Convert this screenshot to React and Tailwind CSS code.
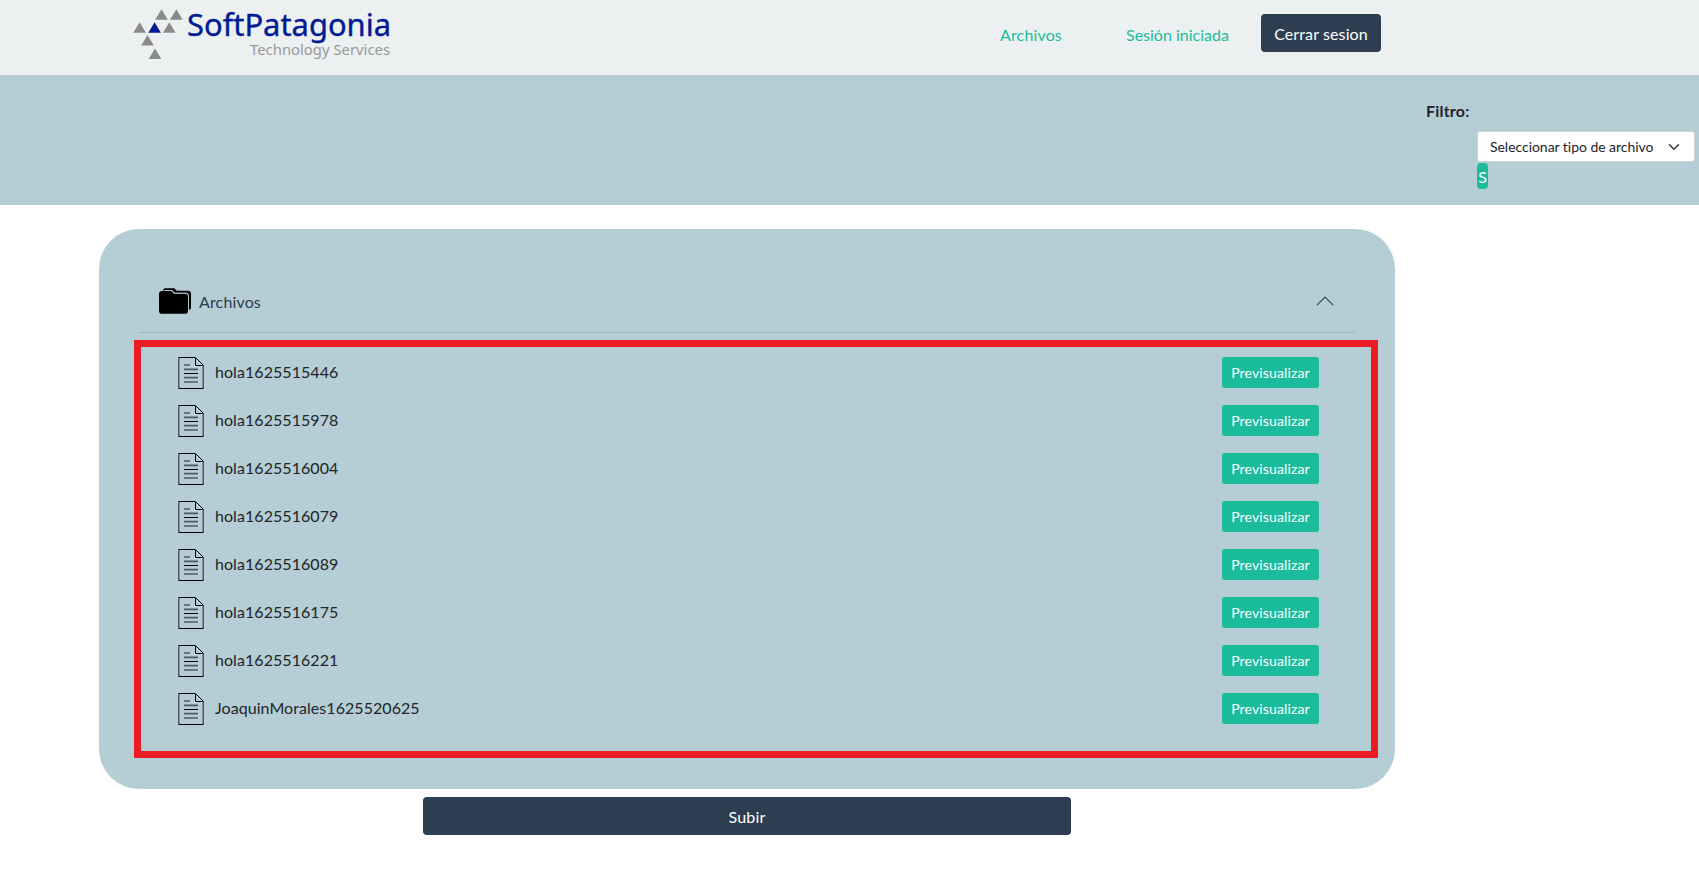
const FILES = [
  'hola1625515446',
  'hola1625515978',
  'hola1625516004',
  'hola1625516079',
  'hola1625516089',
  'hola1625516175',
  'hola1625516221',
  'JoaquinMorales1625520625',
];

function Logo() {
  return (
    <svg width="264" height="69" viewBox="132 0 264 69" className="block overflow-visible">
      <path
        fill="#8a8a8c"
        d="M161.500 9.300l6.300 10.500h-12.600zM176.300 9.300l6.300 10.500h-12.600zM139.600 22.200l6.300 10.500h-12.600zM169.300 22.200l6.300 10.500h-12.600zM147.500 35l6.300 10.500h-12.600zM155 48.400l6.300 10.500h-12.600z"
      />
      <path fill="#021b93" d="M154.600 22.200l6.300 10.500h-12.600z" />
      <text x="187" y="35.8" textLength="204" lengthAdjust="spacingAndGlyphs" fontSize="31.5" fill="#021b93" stroke="#021b93" strokeWidth=".4" fontFamily="'Noto Sans', sans-serif">
        SoftPatagonia
      </text>
      <text x="250" y="54.5" textLength="140" lengthAdjust="spacingAndGlyphs" fontSize="15" fill="#98999b" fontFamily="'Noto Sans', sans-serif">
        Technology Services
      </text>
    </svg>
  );
}

function FolderIcon() {
  return (
    <svg width="32" height="26" viewBox="0 0 32 26" className="block">
      <path d="M4 3C4 1.200 5 .3 6.500 .3H14c1.500 0 2 .5 2.700 1.400.6.800 1 1.100 2 1.100h10.500C31 2.800 32 3.700 32 5.500v14c0 1.500-.8 2.300-2.500 2.400V8c0-2-1-3-3-3H16.500c-1 0-1.400-.4-2-1.200C13.800 2.700 13 2.200 12 2.200z" />
      <path d="M0 6c0-2 1-3 3-3h8c1.400 0 2 .4 2.700 1.500.6.900 1.200 1.300 2.300 1.300h10c2 0 3 .9 3 2.800V23c0 1.900-1 2.800-3 2.800H3c-2 0-3-.9-3-2.800z" />
      <path fill="none" stroke="#b5cdd4" strokeWidth=".9" d="M4.500 2.500H12c1.200 0 1.800.5 2.500 1.500.5.800 1 1.100 2 1.100h10c2 0 3 1 3 2.900v14" />
    </svg>
  );
}

function FileIcon() {
  return (
    <svg width="26" height="32" viewBox="0 0 26 32" fill="none" stroke="#000" className="block shrink-0">
      <path d="M.5 .5H17.500M.5 31.500H25.500M17.500 .5V8.500H25.500M17.500 .5L25.500 8.500" />
      <path stroke="#505a5e" strokeWidth="1.500" d="M.75 1V31M25.250 8.500V31" />
      <path stroke="#505a5e" strokeWidth="1.700" d="M6 8H12M6 12.300H20M6 20.700H20M6 25H20" />
      <path d="M6 16.500H20" />
    </svg>
  );
}

export default function App() {
  return (
    <div className="h-[871px] w-full overflow-hidden bg-white font-['Lato',sans-serif] text-base leading-6 text-[#212529] [font-variant-ligatures:none]">
      <header className="flex h-[75px] items-start bg-[#ecf0f1] pl-[132px]">
        <div className="w-[868px]">
          <Logo />
        </div>
        <nav className="flex text-[#1abc9c]">
          <a className="w-[126px] pt-[23px] tracking-[0.15px]">Archivos</a>
          <a className="w-[135px] pt-[23px]">Sesión iniciada</a>
        </nav>
        <button className="mt-3.5 h-[38px] w-[120px] rounded bg-[#2c3e50] pt-0.5 tracking-[0.12px] text-white">Cerrar sesion</button>
      </header>

      <section className="h-[130px] bg-[#b5cdd4] pl-[1426px] pt-6">
        <div className="font-bold tracking-[0.2px]">Filtro:</div>
        <div className="ml-[51px] mt-2">
          <div className="flex h-[31px] w-[218px] items-center justify-between rounded-[3px] border border-[#ced4da] bg-white pl-3 pr-3.5 text-sm">
            <span className="whitespace-nowrap tracking-[-0.04px]">Seleccionar tipo de archivo</span>
            <svg width="12" height="12" viewBox="0 0 16 16" fill="none" stroke="#343a40" strokeWidth="2" strokeLinecap="round" strokeLinejoin="round">
              <path d="M2 5l6 6 6-6" />
            </svg>
          </div>
          <button className="mt-px flex h-[26px] w-[11px] items-center justify-center rounded bg-[#1abc9c] pt-0.5 text-white">S</button>
        </div>
      </section>

      <main className="ml-[99px] mt-6 w-[1296px]">
        <section className="h-[560px] rounded-[40px] bg-[#b5cdd4] pl-[35px] pt-10">
          <div className="ml-[5px] flex h-16 w-[1216px] items-center border-b border-[#9eb2ba] pl-5 pr-[21px] text-[#2c3e50]">
            <FolderIcon />
            <span className="ml-2 mt-[3px] tracking-[0.15px]">Archivos</span>
            <svg width="18" height="18" viewBox="0 0 16 16" fill="none" stroke="currentColor" strokeLinecap="round" strokeLinejoin="round" className="ml-auto">
              <path d="M1 11.500l7-7 7 7" />
            </svg>
          </div>
          <ul className="mt-[7px] h-[418px] w-[1244px] border-[7px] border-[#ed1c24] pl-[37px] pr-[52px] pt-[10px]">
            {FILES.map((name) => (
              <li key={name} className="flex h-12 items-start">
                <FileIcon />
                <span className="ml-[11px] mt-[3px] tracking-[0.06px]">{name}</span>
                <button className="ml-auto flex h-[31px] w-[97px] items-center justify-center rounded-[3px] bg-[#1abc9c] pt-px text-sm tracking-[0.15px] text-white">Previsualizar</button>
              </li>
            ))}
          </ul>
        </section>
        <button className="mx-auto mt-2 block h-[38px] w-[648px] rounded bg-[#2c3e50] pt-0.5 tracking-[0.15px] text-white">Subir</button>
      </main>
    </div>
  );
}
